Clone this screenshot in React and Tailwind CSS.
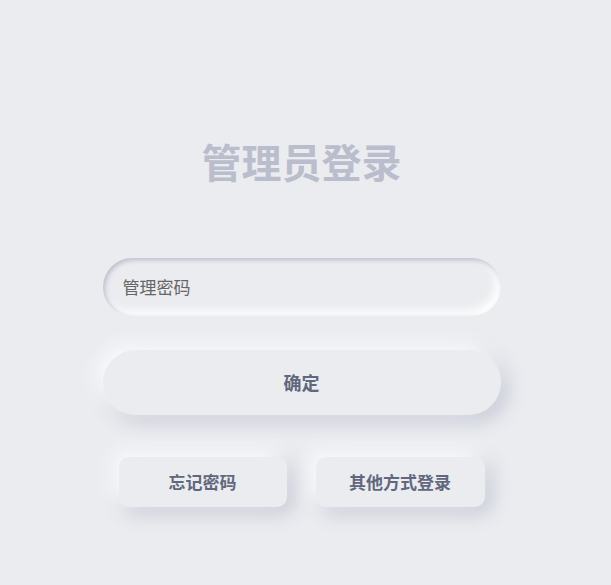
export default function App() {
    const font = { fontFamily: '"Noto Sans CJK SC", "Noto Sans", sans-serif' };

    return (
        <div className="min-h-[585px] w-full bg-[#ebecf0] flex flex-col items-center pt-[129px]" style={font}>
            <div className="w-[398px] mr-[8px] flex flex-col">
                <h1 className="text-center text-[40px] leading-[64px] font-bold text-[#babecc]">
                    管理员登录
                </h1>

                <div className="mt-[65px] h-[58px] rounded-full bg-[#ebecf0] shadow-[inset_2px_2px_5px_#babecc,inset_-5px_-5px_10px_#ffffff] flex items-center px-[20px]">
                    <input
                        className="w-full bg-transparent outline-none text-[17px] text-[#666666] placeholder:text-[#666666]"
                        placeholder="管理密码"
                    />
                </div>

                <button className="mt-[34px] h-[65px] rounded-full bg-[#ebecf0] shadow-[-5px_-5px_20px_#ffffff,5px_5px_20px_#babecc] text-[18px] font-bold text-[#61677c]">
                    确定
                </button>

                <div className="mt-[42px] flex justify-between px-[16px]">
                    <button className="w-[168px] h-[50px] rounded-[10px] bg-[#ebecf0] shadow-[-5px_-5px_20px_#ffffff,5px_5px_20px_#babecc] text-[17px] font-bold text-[#61677c]">
                        忘记密码
                    </button>
                    <button className="w-[169px] h-[50px] rounded-[10px] bg-[#ebecf0] shadow-[-5px_-5px_20px_#ffffff,5px_5px_20px_#babecc] text-[17px] font-bold text-[#61677c]">
                        其他方式登录
                    </button>
                </div>
            </div>
        </div>
    );
}
